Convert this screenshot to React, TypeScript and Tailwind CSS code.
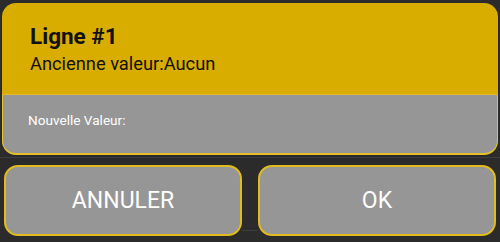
export default function App() {
  return (
    <div
      className="flex h-[242px] w-[500px] flex-col overflow-hidden bg-[#2b2b2b]"
      style={{ fontFamily: "Roboto, 'Noto Sans', sans-serif" }}
    >
      <div className="px-[2px] pt-[3px]">
        <div className="flex h-[91px] flex-col justify-start rounded-t-[14px] bg-[#d9ac00] px-[28px] pt-[20px]">
          <div className="text-[22.5px] font-bold leading-[26px] text-[#111]">Ligne #1</div>
          <div className="mt-[4px] text-[18.3px] leading-[22px] text-[#111]">
            Ancienne valeur:Aucun
          </div>
        </div>
        <div className="h-px bg-[#e3b92a]" />
        <div className="h-[60px] rounded-b-[14px] border-x border-b-2 border-[#e6c12c] bg-[#969696] px-[25px] pt-[17px]">
          <div className="text-[13.6px] leading-[16px] text-white">Nouvelle Valeur:</div>
        </div>
      </div>

      <div className="mt-[2px] h-px bg-[#3d3d3d]" />

      <div className="mt-[7px] flex px-[4px]">
        <button
          type="button"
          className="flex h-[71px] w-[238px] items-center justify-center rounded-[14px] border-2 border-[#e2bb1e] bg-[#969696] pt-[2px] text-[23px] text-white"
        >
          ANNULER
        </button>
        <div className="flex w-[16px] flex-col justify-end pb-[5px]">
          <div className="h-px bg-[#3d3d3d]" />
        </div>
        <button
          type="button"
          className="flex h-[71px] w-[238px] items-center justify-center rounded-[14px] border-2 border-[#e2bb1e] bg-[#969696] pt-[2px] text-[23px] text-white"
        >
          OK
        </button>
      </div>
    </div>
  );
}
